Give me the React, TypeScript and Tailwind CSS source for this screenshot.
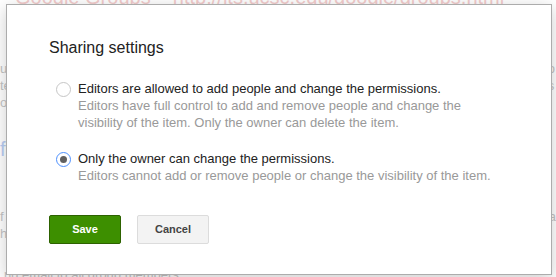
import { useState } from 'react';

const options = [
  {
    id: 'editors',
    label: 'Editors are allowed to add people and change the permissions.',
    help: 'Editors have full control to add and remove people and change the visibility of the item. Only the owner can delete the item.',
  },
  {
    id: 'owner',
    label: 'Only the owner can change the permissions.',
    help: 'Editors cannot add or remove people or change the visibility of the item.',
  },
];

function Radio({ checked }: { checked: boolean }) {
  return (
    <span
      className={
        checked
          ? 'mt-[2px] flex h-[15px] w-[15px] shrink-0 items-center justify-center rounded-full border border-[#4d90fe] bg-white'
          : 'mt-[2px] flex h-[15px] w-[15px] shrink-0 items-center justify-center rounded-full border border-[#c6c6c6] bg-white'
      }
    >
      {checked && <span className="h-[7px] w-[7px] rounded-full bg-[#606060]" />}
    </span>
  );
}

export default function App() {
  const [choice, setChoice] = useState('owner');

  return (
    <div className="relative h-[277px] w-[556px] overflow-hidden bg-white font-['Liberation_Sans',Arial,sans-serif]">
      {/* page behind the dialog */}
      <div className="flex flex-col">
        <div className="-mt-[13px] whitespace-nowrap pl-[15px] text-[20px] leading-[20px] text-[#f3cccc] underline">
          Google Groups – http://its.ucsc.edu/google/groups.html
        </div>
        <div className="mt-[53px] flex justify-between text-[13px] leading-[17px] text-[#c4c4c4]">
          <div className="flex flex-col">
            <span>u</span>
            <span>te</span>
            <span>or</span>
          </div>
          <div className="flex flex-col pr-[1px]">
            <span>o</span>
            <span>s</span>
          </div>
        </div>
        <div className="mt-[27px] text-[20px] leading-[22px] text-[#b9cdf3]">f</div>
        <div className="mt-[48px] flex justify-between text-[13px] leading-[17px] text-[#c4c4c4]">
          <div className="flex flex-col">
            <span>f</span>
            <span>h</span>
          </div>
          <span>a</span>
        </div>
        <div className="mt-[24px] whitespace-nowrap pl-[4px] text-[13px] leading-[17px] text-[#c4c4c4]">
          nd email to all group members
        </div>
      </div>

      {/* dialog */}
      <div className="absolute left-[6px] top-[4px] h-[271px] w-[546px] border border-[#acacac] bg-white pl-[42px] pt-[33px] text-[13px] shadow-[0_4px_16px_rgba(0,0,0,0.2)]">
        <h2 className="text-[16px] leading-[20px] text-[#222]">Sharing settings</h2>

        <div className="mt-[22px] flex flex-col gap-[19px]">
          {options.map((o) => (
            <label
              key={o.id}
              className="flex cursor-pointer gap-[7px] pl-[7px]"
              onClick={() => setChoice(o.id)}
            >
              <Radio checked={choice === o.id} />
              <div className="flex flex-col leading-[17px]">
                <span className="text-[#222]">{o.label}</span>
                <span className="w-[430px] text-[#999]">{o.help}</span>
              </div>
            </label>
          ))}
        </div>

        <div className="mt-[31px] flex gap-[16px]">
          <button className="h-[29px] w-[72px] rounded-[2px] border border-[#2d6200] bg-[#3d8f00] text-[11px] font-bold text-white">
            Save
          </button>
          <button className="h-[29px] w-[72px] rounded-[2px] border border-[#dcdcdc] bg-[#f3f3f3] text-[11px] font-bold text-[#444]">
            Cancel
          </button>
        </div>
      </div>
    </div>
  );
}
